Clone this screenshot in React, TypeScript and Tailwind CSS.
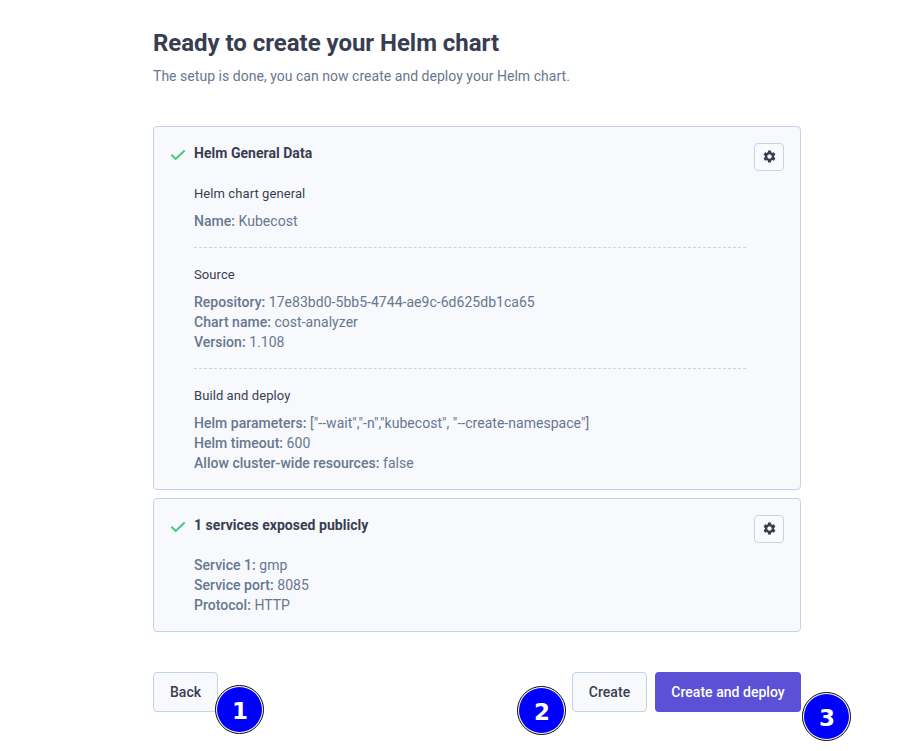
import type { ReactNode } from 'react'
import { MdSettings } from 'react-icons/md'

function Card({ title, children }: { title: string; children: ReactNode }) {
  return (
    <section className="flex items-start rounded border border-[#c6d3e7] bg-[#f8f9fd] p-4">
      <svg className="mt-[5px] h-4 w-4 shrink-0" viewBox="0 0 16 16" fill="none">
        <path d="M1.4 6.7 5.7 10.9 14.7 2.6" stroke="#44c979" strokeWidth="2" />
      </svg>
      <div className="ml-2 min-w-0 grow">
        <h2 className="mb-5 text-sm leading-5 font-bold tracking-[0.03px] text-[#383e50]">{title}</h2>
        {children}
      </div>
      <button className="ml-2 flex h-7 w-[30px] shrink-0 items-center justify-center rounded border border-[#c6d3e7] bg-[#fafbff] pb-px text-[#383e50]">
        <MdSettings className="h-[15px] w-[15px]" />
      </button>
    </section>
  )
}

function Group({ title, children }: { title: string; children: ReactNode }) {
  return (
    <div className="mb-4 border-b border-dashed border-[#c6d3e7] pb-4 last:mb-0 last:border-b-0 last:pb-0">
      <h3 className="mb-[7px] pt-px text-[13px] leading-5 tracking-[0.08px] text-[#383e50]">{title}</h3>
      {children}
    </div>
  )
}

function Row({ label, value }: { label: string; value: string }) {
  return (
    <p className="text-sm leading-5 tracking-[0.03px] whitespace-nowrap text-[#67778e]">
      <span className="font-medium">{label}:</span> {value}
    </p>
  )
}

function Marker({ n, place }: { n: number; place: string }) {
  return (
    <div className={`absolute h-[49px] w-[49px] rounded-full border-[1.5px] border-black bg-white p-px ${place}`}>
      <span className="flex h-full w-full items-center justify-center rounded-full bg-[#0000fe] pt-1 pl-px font-['DejaVu_Sans',sans-serif] text-[23px] leading-none font-bold text-white">{n}</span>
    </div>
  )
}

export default function App() {
  return (
    <main className="relative h-[751px] w-[920px] overflow-hidden bg-white pt-[27px] pl-[153px] font-['Roboto',sans-serif]">
      <div className="w-[648px]">
        <h1 className="text-2xl leading-8 font-bold tracking-[-0.03px] text-[#383e50]">Ready to create your Helm chart</h1>
        <p className="mt-[7px] text-sm leading-5 tracking-[0.03px] text-[#67778e]">The setup is done, you can now create and deploy your Helm chart.</p>

        <div className="mt-10 flex flex-col gap-2">
          <Card title="Helm General Data">
            <Group title="Helm chart general">
              <Row label="Name" value="Kubecost" />
            </Group>
            <Group title="Source">
              <Row label="Repository" value="17e83bd0-5bb5-4744-ae9c-6d625db1ca65" />
              <Row label="Chart name" value="cost-analyzer" />
              <Row label="Version" value="1.108" />
            </Group>
            <Group title="Build and deploy">
              <Row label="Helm parameters" value={'["--wait","-n","kubecost", "--create-namespace"]'} />
              <Row label="Helm timeout" value="600" />
              <Row label="Allow cluster-wide resources" value="false" />
            </Group>
          </Card>
          <Card title="1 services exposed publicly">
            <Row label="Service 1" value="gmp" />
            <Row label="Service port" value="8085" />
            <Row label="Protocol" value="HTTP" />
          </Card>
        </div>

        <div className="mt-10 flex h-10 gap-2 text-sm font-medium tracking-[0.03px] text-[#383e50]">
          <button className="mr-auto w-[65px] rounded border border-[#c6d3e7] bg-[#f8f9fd]">Back</button>
          <button className="w-[75px] rounded border border-[#c6d3e7] bg-[#f8f9fd]">Create</button>
          <button className="w-[146px] rounded bg-[#5b50d6] text-white">Create and deploy</button>
        </div>
      </div>

      <Marker n={1} place="left-[215px] top-[685px]" />
      <Marker n={2} place="left-[517px] top-[686px]" />
      <Marker n={3} place="left-[802px] top-[692px]" />
    </main>
  )
}
